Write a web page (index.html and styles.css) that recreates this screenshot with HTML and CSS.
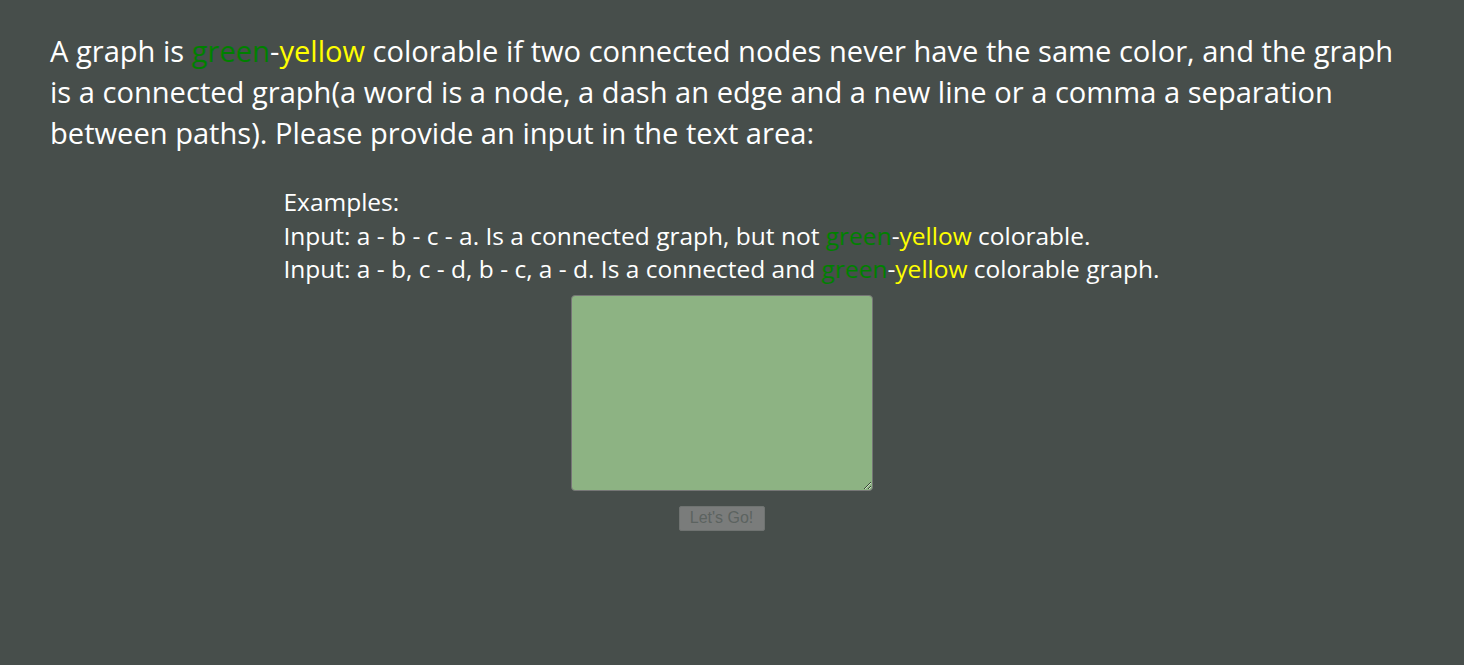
FILE: index.html
```html
<!DOCTYPE html>
<html>
<head>
<meta charset="utf-8">
<link rel="stylesheet" href="styles.css">
</head>
<body>
<main class="page">
  <p class="intro">A graph is <span class="green">green</span>-<span class="yellow">yellow</span> colorable if two connected nodes never have the same color, and the graph is a connected graph(a word is a node, a dash an edge and a new line or a comma a separation between paths). Please provide an input in the text area:</p>
  <div class="center">
    <div class="examples">
      <div>Examples:</div>
      <div>Input: a - b - c - a. Is a connected graph, but not <span class="green">green</span>-<span class="yellow">yellow</span> colorable.</div>
      <div>Input: a - b, c - d, b - c, a - d. Is a connected and <span class="green">green</span>-<span class="yellow">yellow</span> colorable graph.</div>
    </div>
    <div class="form">
      <textarea class="input"></textarea>
      <button class="go" disabled>Let's Go!</button>
    </div>
  </div>
</main>
</body>
</html>
```

FILE: styles.css
```css
html, body {
  margin: 0;
  padding: 0;
  background: #474e4b;
  height: 100%;
}
.page {
  padding: 31px 50px 0 50px;
  color: #ffffff;
  font-family: "Open Sans", sans-serif;
}
.intro {
  margin: 0;
  font-size: 29.1px;
  line-height: 41px;
}
.green { color: #008000; }
.yellow { color: #ffff00; }
.center {
  text-align: center;
  margin-top: 31px;
  padding-right: 21px;
}
.examples {
  display: inline-block;
  text-align: left;
  font-size: 24.5px;
  line-height: 33.5px;
}
.form {
  display: flex;
  flex-direction: column;
  align-items: center;
  gap: 15px;
  margin-top: 9px;
}
.input {
  width: 302px;
  height: 196px;
  box-sizing: border-box;
  background: #8db383;
  border: 1px solid #767676;
  border-radius: 4px;
  margin: 0;
  resize: both;
}
.go {
  width: 86px;
  height: 25px;
  box-sizing: border-box;
  font-family: Arial, "Liberation Sans", sans-serif;
  font-size: 16px;
  color: #5c6360;
  background: #7a7c7b;
  border: 1px solid #6f7371;
  border-radius: 2px;
  padding: 0;
}
```
